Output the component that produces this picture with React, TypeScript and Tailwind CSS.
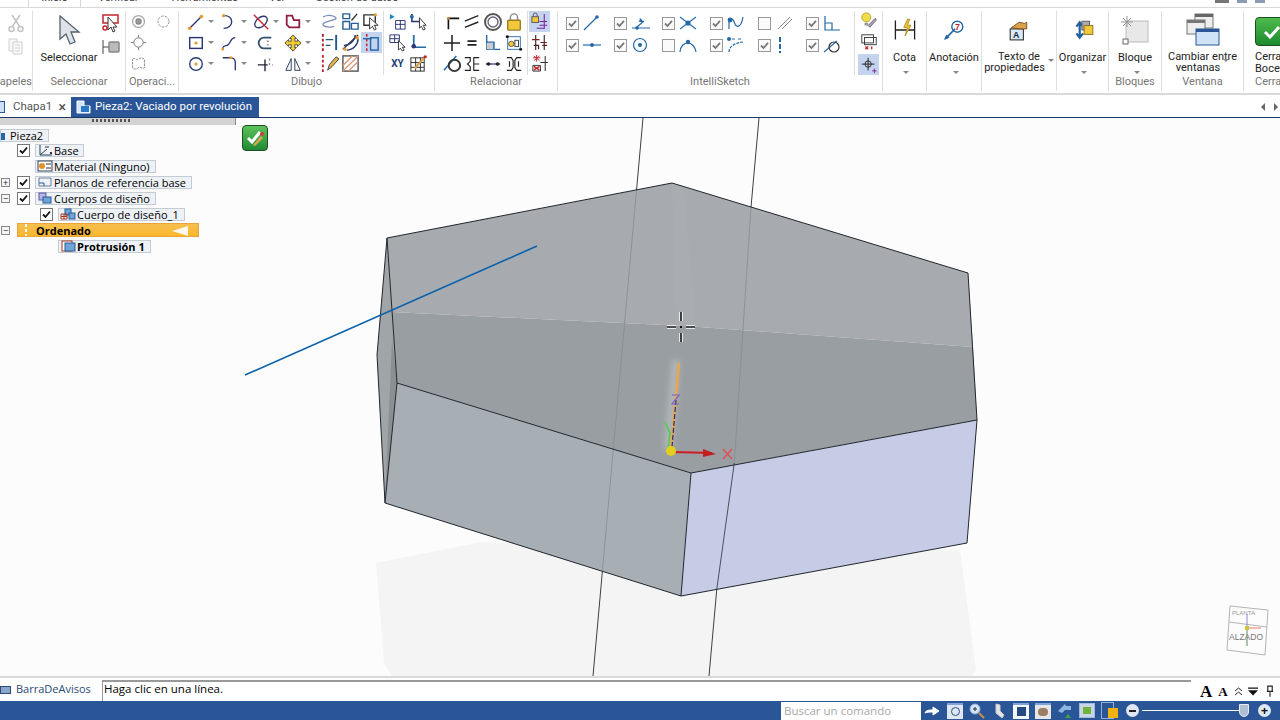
import type { ReactNode } from 'react';

const NAVY = '#2b3674';
const BLUE = '#2468a8';
const ORANGE = '#e59a2c';
const RED = '#c4262e';

function Ic({ children, size = 20 }: { children: ReactNode; size?: number }) {
	return (
		<svg viewBox="0 0 20 20" width={size} height={size} fill="none" stroke={NAVY} strokeWidth="1.5" className="shrink-0">
			{children}
		</svg>
	);
}

const Caret = () => <span className="w-0 h-0 ml-[3px] border-x-[3px] border-x-transparent border-t-[3px] border-t-[#888]" />;

function Cell({ caret, active, w = 'w-[21px]', children }: { caret?: boolean; active?: boolean; w?: string; children?: ReactNode }) {
	return (
		<div className={`${w} h-[21px] flex items-center justify-center ${active ? 'bg-[#c5d4ee]' : ''}`}>
			{children}
			{caret && <Caret />}
		</div>
	);
}

function Group({ w, label, children, className = '' }: { w: string; label?: string; children: ReactNode; className?: string }) {
	return (
		<div className={`${w} shrink-0 h-full flex flex-col items-center border-r border-[#dedede] ${className}`}>
			<div className="flex-1 w-full flex min-h-0">{children}</div>
			<div className="h-[17px] text-[11px] leading-[15px] text-[#767676] whitespace-nowrap">{label}</div>
		</div>
	);
}

function Large({ label, caret, icon }: { label: ReactNode; caret?: boolean; icon: ReactNode }) {
	return (
		<div className="w-full flex flex-col items-center">
			<div className="h-[37px] mt-[1px] flex items-center justify-center">{icon}</div>
			<div className="mt-[1px] pt-[2px] text-[11px] leading-[11.5px] text-[#222] text-center whitespace-nowrap">{label}</div>
			{caret && <div className="mt-[8px] flex"><Caret /></div>}
		</div>
	);
}

function Check({ on = true }: { on?: boolean }) {
	return (
		<svg width="13" height="13" viewBox="0 0 13 13" className="shrink-0">
			<rect x="0.5" y="0.5" width="12" height="12" fill="#fbfbfb" stroke="#999" />
			{on && <path d="M3 6.500 5.500 9 10 3.800" fill="none" stroke="#777" strokeWidth="1.800" />}
		</svg>
	);
}

function ISk({ on, children }: { on?: boolean; children: ReactNode }) {
	return (
		<div className="w-[48px] h-[22px] flex items-center gap-[3px]">
			<Check on={on} />
			<svg width="20" height="18" viewBox="0 0 20 18" fill="none" stroke={BLUE} strokeWidth="1.200">
				{children}
			</svg>
		</div>
	);
}

const dot = (x: number, y: number, c = BLUE, r = 1.8) => <circle cx={x} cy={y} r={r} fill={c} stroke="none" />;

function Ribbon() {
	return (
		<div className="h-[87px] shrink-0 flex border-b-2 border-[#d9d9d9] bg-white pt-[3px] pb-[2px] font-['Roboto',sans-serif]">
			<Group w="w-[33px]" label="apeles" className="items-end">
				<div className="w-full flex flex-col items-end pr-[6px] pt-[2px] gap-[3px] opacity-70">
					<Ic><g stroke="#aaa"><path d="m6 2 8 12M14 2 6 14" /><circle cx="5.500" cy="16" r="2.500" /><circle cx="14.500" cy="16" r="2.500" /></g></Ic>
					<Ic><g stroke="#bbb" strokeWidth="1"><path d="M3 3h8v12H3z" fill="#f4f4f4" /><path d="M7 6h9v12H7z" fill="#f8f8f8" /><path d="M9 9h5M9 12h5M9 15h5" /></g></Ic>
				</div>
			</Group>
			<Group w="w-[93px]" label="Seleccionar">
				<div className="w-[66px] pl-[6px]">
					<Large
						label="Seleccionar"
						icon={<svg width="24" height="32" viewBox="0 0 24 32"><path d="M3 1v23l6-5 4 10 5-2-4-10h8z" fill="#dde3e8" stroke="#56606a" strokeWidth="1.300" /></svg>}
					/>
				</div>
				<div className="flex flex-col gap-[4px] pt-[2px] pl-[2px]">
					<Ic><path d="M2 2h15v8H2z" stroke={RED} /><path d="M7 4v13l3-3 2 5 2-1-2-4h4z" fill="#fff" stroke="#333" strokeWidth="1" /><circle cx="4" cy="15" r="2" stroke={RED} /></Ic>
					<Ic><path d="M2 3v14M2 10h6" stroke="#444" strokeWidth="1" /><rect x="8" y="5" width="10" height="10" rx="1" fill="#bbb" stroke="#888" /></Ic>
				</div>
			</Group>
			<Group w="w-[53px]" label="Operaci...">
				<div className="w-full grid grid-cols-[1fr_1fr] grid-rows-[21px_21px_21px] pl-[2px]">
					<Cell><Ic size={17}><circle cx="10" cy="10" r="7" stroke="#aaa" /><circle cx="10" cy="10" r="3" fill="#999" stroke="#888" /></Ic></Cell>
					<Cell><Ic size={17}><circle cx="10" cy="10" r="6.500" stroke="#777" strokeWidth="1" strokeDasharray="3 1.500" /></Ic></Cell>
					<Cell><Ic size={17}><circle cx="10" cy="10" r="5.500" stroke="#666" strokeWidth="1" /><path d="M10 1v3M10 16v3M1 10h3M16 10h3" stroke="#666" strokeWidth="1" /></Ic></Cell>
					<div />
					<Cell><Ic size={17}><path d="M3 5c4-3 4 2 7 0s4-2 7 0v10c-3 2-4-2-7 0s-4 2-7 0z" stroke="#777" strokeWidth="1" strokeDasharray="3 1" /></Ic></Cell>
				</div>
			</Group>
			<Group w="w-[256px]" label="Dibujo">
				<div className="w-full flex pl-[5px]">
					<div className="grid grid-cols-[33px_32px_32px_32px] grid-rows-[21px_21px_21px]">
						<Cell w="w-[33px]" caret><Ic size={18}><path d="M3 17 16 4" />{dot(3, 17, ORANGE, 2)}{dot(16, 4, ORANGE, 2)}</Ic></Cell>
						<Cell w="w-[32px]" caret><Ic size={18}><path d="M4 3c12-1 12 14 0 14" />{dot(4, 3, ORANGE)}</Ic></Cell>
						<Cell w="w-[32px]" caret><Ic size={18}><ellipse cx="10" cy="10" rx="8" ry="5" transform="rotate(-40 10 10)" /><path d="M2 2l16 16" stroke={RED} /></Ic></Cell>
						<Cell w="w-[32px]" caret><Ic size={18}><path d="M3 3h6l2 5h6v8H6L3 13z" stroke="#8e1f3e" strokeWidth="2" /></Ic></Cell>
						<Cell w="w-[33px]" caret><Ic size={18}><rect x="3" y="4" width="14" height="12" strokeWidth="1.600" />{dot(10, 10, ORANGE)}</Ic></Cell>
						<Cell w="w-[32px]" caret><Ic size={18}><path d="M3 17c0-6 4-2 7-6s2-7 7-7" />{dot(3, 17, ORANGE, 1.500)}</Ic></Cell>
						<Cell w="w-[32px]"><Ic size={18}><path d="M17 4H9a6 6 0 0 0 0 12h8" strokeWidth="2" stroke="#32506e" /><path d="M12 8h2M12 12h2" stroke="#888" /></Ic></Cell>
						<Cell w="w-[32px]" caret><Ic size={18}><path d="M10 1 14 5H12V8H15V6l4 4-4 4v-2h-3v3h2l-4 4-4-4h2v-3H5v2l-4-4 4-4v2h3V5H6z" fill="#f0c92a" stroke="#444" strokeWidth="1" /></Ic></Cell>
						<Cell w="w-[33px]" caret><Ic size={18}><circle cx="10" cy="10" r="7" /><circle cx="10" cy="10" r="1" fill={ORANGE} stroke={ORANGE} /></Ic></Cell>
						<Cell w="w-[32px]" caret><Ic size={18}><path d="M3 3h9a5 5 0 0 1 5 5v9" />{dot(12, 3, ORANGE, 1.600)}</Ic></Cell>
						<Cell w="w-[32px]"><Ic size={18}><path d="M2 11h11M10 5v13" stroke="#223" /><path d="M15 4v2M15 9v2M18 11h1" stroke="#888" /></Ic></Cell>
						<Cell w="w-[32px]" caret><Ic size={18}><path d="M8 4v13H2zM12 4v13h6z" stroke="#31405e" strokeWidth="1.100" /></Ic></Cell>
					</div>
					<div className="ml-[6px] grid grid-cols-[21px_21px_22px] grid-rows-[21px_21px_21px]">
						<Cell><Ic><path d="M3 5c6-3 12-1 13 1s-12 3-13 6 9 4 11 2" stroke="#7c8eb8" strokeWidth="1.300" /></Ic></Cell>
						<Cell><Ic size={19}><path d="M2 2h7v5H2zM2 10h7v8H2zM11 12h7v6h-7z" stroke="#275f96" /><path d="m11 9 6-7" stroke="#333" /></Ic></Cell>
						<Cell><Ic size={19}><path d="M2 3h12v11H2z" stroke="#333" /><path d="M8 6v12l3-3 2 4 2-1-2-4h4z" fill="#fff" stroke="#333" strokeWidth="1" />{dot(14, 3, ORANGE)}</Ic></Cell>
						<Cell><Ic size={19}><path d="M3 1v18" stroke="#a3202a" strokeWidth="2" strokeDasharray="3 2" /><path d="M17 2v16" strokeWidth="2" stroke="#27578a" /><path d="M6 7h8M11 13h-5" stroke="#27578a" /></Ic></Cell>
						<Cell><Ic size={19}><path d="M2 17 18 2" stroke="#333" /><path d="M3 13c7 0 12-6 12-11M6 18c7 0 12-6 12-12" stroke={NAVY} />{dot(4, 17, ORANGE)}{dot(17, 5, ORANGE)}</Ic></Cell>
						<Cell active><Ic size={19}><path d="M5 1v18" stroke={RED} strokeWidth="1.600" strokeDasharray="3 2" /><rect x="9" y="5" width="8" height="13" stroke={BLUE} /><path d="M1 6h9" stroke={BLUE} /></Ic></Cell>
						<Cell><Ic size={19}><path d="M3 1v18" stroke={RED} strokeWidth="2" strokeDasharray="3 2" /><path d="m8 17 2-6 7-8 3 2-7 8z" fill="#e6b04a" stroke="#444" strokeWidth="1" /></Ic></Cell>
						<Cell><Ic size={19}><rect x="2" y="2" width="16" height="16" stroke="#555" /><path d="M2 12 12 2M2 18 18 2M8 18l10-10" stroke="#d99a7a" /></Ic></Cell>
						<div />
					</div>
					<div className="w-px h-[64px] bg-[#dcdcdc]" />
					<div className="ml-[3px] grid grid-cols-[21px_21px] grid-rows-[21px_21px_21px]">
						<Cell><Ic size={19}><path d="m2 2 5 3-5 3z" fill="#1f8ac0" stroke="none" /><path d="M8 9h10v9H8zM13 9v9M8 13h10" stroke={NAVY} strokeWidth="1" /></Ic></Cell>
						<Cell><Ic size={19}><path d="M3 2v8h8" strokeWidth="1.600" />{dot(3, 5, BLUE, 2)}<path d="M11 6v11l2-2 2 4 2-1-2-4h3z" fill="#fff" stroke="#333" strokeWidth="1" /></Ic></Cell>
						<Cell><Ic size={19}><path d="M2 2h10v8H2zM7 2v8M2 6h10" strokeWidth="1" /><path d="M11 8v10l2-2 2 3 2-1-2-3h3z" fill="#fff" stroke="#333" strokeWidth="1" /></Ic></Cell>
						<Cell><Ic size={19}><path d="M5 2v13h13" strokeWidth="1.800" stroke={BLUE} />{dot(5, 14, NAVY, 2.400)}</Ic></Cell>
						<Cell><span className="text-[10px] font-bold text-[#243c78] leading-none">XY</span></Cell>
						<Cell><Ic size={19}><rect x="2" y="4" width="14" height="14" stroke="#2a2a2a" strokeWidth="1" /><path d="M7 4v14M12 4v14M2 9h14M2 14h14" stroke="#2a2a2a" strokeWidth="1" /><path d="M6 15 16 4" stroke="#d8a040" strokeWidth="2" />{dot(17, 3, RED)}</Ic></Cell>
					</div>
				</div>
			</Group>
			<Group w="w-[123px]" label="Relacionar">
				<div className="w-full flex pl-[7px]">
					<div className="grid grid-cols-[20px_20px_21px_21px] grid-rows-[21px_21px_21px]">
						<Cell w="w-[20px]"><Ic size={18}><path d="M6 18V6h12" stroke="#111" strokeWidth="1.800" />{dot(6, 6, '#d08030', 1.600)}</Ic></Cell>
						<Cell w="w-[20px]"><Ic size={18}><path d="m2 9 15-6M2 16l15-6" stroke="#222" /></Ic></Cell>
						<Cell><Ic size={20}><circle cx="10" cy="10" r="8" stroke="#555" strokeWidth="2" /><circle cx="10" cy="10" r="5" stroke="#667" strokeWidth="1.400" /></Ic></Cell>
						<Cell><Ic size={18}><rect x="3" y="8" width="14" height="11" rx="1" fill="#f1c83a" stroke="#9a7a20" /><path d="M6 8V5a4 4 0 0 1 8 0v3" stroke="#888" strokeWidth="1.600" /></Ic></Cell>
						<Cell w="w-[20px]"><Ic size={18}><path d="M1 10h18M10 1v18" stroke="#222" strokeWidth="1.700" /></Ic></Cell>
						<Cell w="w-[20px]"><Ic size={18}><path d="M5 8h10M5 12h10" stroke="#222" strokeWidth="2" /></Ic></Cell>
						<Cell><Ic size={18}><path d="M3 1v16h15" stroke={BLUE} /><rect x="3" y="10" width="9" height="7" fill="#ccc" stroke="none" /><path d="M3 9h8v8" stroke={BLUE} /></Ic></Cell>
						<Cell><Ic size={18}><rect x="3" y="3" width="14" height="14" stroke={BLUE} strokeWidth="1" /><path d="M1 3h3M16 17h3" stroke="#000" strokeWidth="2.500" /><circle cx="7" cy="11" r="3" fill="#f1c83a" stroke="#555" strokeWidth="1" /><rect x="11" y="7" width="4" height="7" stroke="#333" strokeWidth="1" /></Ic></Cell>
						<Cell w="w-[20px]"><Ic size={19}><path d="M1 17 14 2" stroke={BLUE} strokeWidth="1.600" /><circle cx="12" cy="12" r="6" stroke="#333" strokeWidth="2" /></Ic></Cell>
						<Cell w="w-[20px]"><Ic size={18}><path d="M2 3h6v4l-3 3 3 3v4H2M18 3h-6v14h6M12 10h6" stroke="#222" strokeWidth="1.300" /></Ic></Cell>
						<Cell><Ic size={18}><path d="M2 10h16" stroke={NAVY} strokeWidth="1.400" />{dot(5, 10, '#222', 2)}{dot(15, 10, '#222', 2)}</Ic></Cell>
						<Cell><Ic size={18}><path d="M2 3h5l2 3v8l-2 3H2M18 3h-5l-2 3v8l2 3h5M5 7v6M15 7v6" stroke="#222" strokeWidth="1.300" /></Ic></Cell>
					</div>
					<div className="w-px h-[64px] ml-[3px] bg-[#dcdcdc]" />
					<div className="ml-[1px] flex flex-col">
						<Cell active><Ic size={19}><rect x="2" y="5" width="7" height="6" fill="#f1c83a" stroke="#555" strokeWidth="1" /><path d="M3.500 5V3a2 2 0 0 1 4 0v2" stroke="#555" strokeWidth="1" /><path d="M15 2v16M10 10h8M10 14h8M7 17h8" stroke="#7b1e9b" strokeWidth="1.100" /></Ic></Cell>
						<Cell><Ic size={19}><path d="M6 2v16M15 2v16" stroke="#4a1f1f" strokeWidth="1.200" /><path d="M2 7h8M11 10h7" stroke="#7b1e1e" strokeWidth="1.200" /><path d="M4 13h5v4M13 13h5" stroke="#4a1f1f" strokeWidth="1.200" /></Ic></Cell>
						<Cell><Ic size={19}><path d="M16 2v16M11 9h8" stroke="#333" strokeWidth="1.100" /><path d="M3 4h8M7 1v7M4 2l6 5M10 2 4 7" stroke={RED} strokeWidth="1" /><path d="M3 12h8v6H3z" stroke="#333" strokeWidth="1" /><path d="m4 13 6 4m0-4-6 4" stroke={RED} strokeWidth="1.700" /></Ic></Cell>
					</div>
				</div>
			</Group>
			<Group w="w-[325px]" label="IntelliSketch">
				<div className="w-[296px] shrink-0 pl-[8px] grid grid-cols-[48px_48px_48px_48px_48px_48px] grid-rows-[22px_22px] content-start pt-px">
					<ISk on><path d="M2 16 15 3" />{dot(15, 3)}</ISk>
					<ISk on><path d="M2 14h18M7 13l7-6" />{dot(7, 14)}<path d="m9 8 1-4 4 4z" fill={BLUE} stroke="none" /></ISk>
					<ISk on><path d="M2 3l16 12M18 3 2 15" strokeWidth="1.100" />{dot(10, 9, BLUE, 2.600)}</ISk>
					<ISk on><path d="M3 15V7c3-5 5 0 6 3s6 5 8-7" />{dot(4, 6, BLUE, 2.400)}</ISk>
					<ISk on={false}><path d="M4 15 16 3M8 15 18 5" stroke="#888" strokeWidth="1" /></ISk>
					<ISk on><path d="M3 2v14h15M3 9h7v7" /></ISk>
					<ISk on><path d="M1 9h18" />{dot(10, 9, BLUE, 2)}</ISk>
					<ISk on><circle cx="10" cy="9" r="6.500" />{dot(10, 9, BLUE, 2)}</ISk>
					<ISk on={false}><path d="M2 16c1-12 14-12 16 0" />{dot(10, 6, BLUE, 2.200)}</ISk>
					<ISk on><path d="M2 3h7m3 0h4M3 16c0-6 6-9 14-10" strokeDasharray="3 1" />{dot(3, 3, BLUE, 2)}</ISk>
					<ISk on><path d="M6 1v16" strokeWidth="2" strokeDasharray="5 2" /></ISk>
					<ISk on><path d="M2 16 15 5" /><circle cx="12" cy="11" r="5" stroke="#333" /></ISk>
				</div>
				<div className="w-[28px] h-[64px] border-l border-[#dedede] flex flex-col items-center">
					<Cell><Ic size={18}><circle cx="7" cy="6" r="5" fill="#f1dc4a" stroke="#b0a030" strokeWidth="1" /><path d="M5 12h4v3H5z" fill="#999" stroke="none" /><path d="m9 15 8-8 1 2-7 8z" fill="#b99ac2" stroke="#666" strokeWidth="1" /></Ic></Cell>
					<Cell><Ic size={18}><rect x="2" y="2" width="13" height="9" stroke="#333" strokeWidth="1" /><rect x="5" y="5" width="13" height="8" stroke="#333" strokeWidth="1" /><path d="M6 15l3 3m0-3-3 3M13 15v3" stroke={RED} strokeWidth="1.500" /></Ic></Cell>
					<div className="mt-[2px]"><Cell active><Ic size={18}><path d="M9 2v14M2 9h14" stroke="#222" strokeWidth="1.100" /><circle cx="9" cy="9" r="3.500" stroke="#222" strokeWidth="1" /><path d="M16 14v5M13.500 16.500h5" stroke="#7b1e9b" strokeWidth="1" /></Ic></Cell></div>
				</div>
			</Group>
			<Group w="w-[44px]">
				<Large
					label="Cota"
					caret
					icon={<Ic size={24}><path d="M2 2v16M18 2v16M2 10h16" stroke="#222" strokeWidth="1.100" /><path d="m12 1-3 7h3l-2 7 5-9h-3l2-5z" fill="#f1c83a" stroke="#a88618" strokeWidth=".7" /></Ic>}
				/>
			</Group>
			<Group w="w-[55px]">
				<Large
					label="Anotación"
					caret
					icon={<Ic size={22}><path d="m2 18 9-9" stroke={BLUE} strokeWidth="1.500" /><path d="m1 19 2-5 3 3z" fill={BLUE} stroke="none" /><circle cx="13" cy="7" r="5" stroke={BLUE} strokeWidth="1.300" /><text x="11" y="10" fontSize="8" fill={RED} stroke="none" fontWeight="700" fontFamily="Liberation Sans">7</text></Ic>}
				/>
			</Group>
			<Group w="w-[75px]">
				<Large
					label={<>Texto de<br />propiedades<span className="inline-block align-middle"><Caret /></span></>}
					icon={<Ic size={22}><rect x="2" y="9" width="12" height="10" fill="#dbe9f7" stroke="#333" strokeWidth="1" /><text x="4.500" y="17.500" fontSize="8" fontWeight="700" fill="#123" stroke="none" fontFamily="Liberation Sans">A</text><path d="m3 8 7-5 5 1 2-1v6h-6z" fill="#d9a24b" stroke="#704a14" strokeWidth=".8" /></Ic>}
				/>
			</Group>
			<Group w="w-[52px]">
				<Large
					label="Organizar"
					caret
					icon={<Ic size={22}><path d="M4 7l3-4 3 4M4 13l3 4 3-4M7 4v12" stroke="#21609e" strokeWidth="2" /><rect x="9" y="2" width="7" height="8" fill="#aaa" stroke="#555" strokeWidth=".8" /><rect x="11" y="6" width="8" height="8" fill="#f1c83a" stroke="#85691b" strokeWidth=".8" /></Ic>}
				/>
			</Group>
			<Group w="w-[53px]" label="Bloques">
				<Large
					label="Bloque"
					caret
					icon={<svg width="30" height="30" viewBox="0 0 30 30"><rect x="6" y="6" width="22" height="21" fill="#e8e8e8" stroke="#bbb" /><path d="M7 1v11M1 7h12M3 3l8 8M11 3l-8 8" stroke="#999" /><rect x="3" y="24" width="5" height="5" fill="#fff" stroke="#666" /></svg>}
				/>
			</Group>
			<Group w="w-[82px]" label="Ventana">
				<Large
					label={<>Cambiar entre<br />ventanas<span className="inline-block align-middle"><Caret /></span></>}
					icon={<svg width="34" height="34" viewBox="0 0 34 34"><rect x="9" y="1" width="18" height="14" fill="#eee" stroke="#777" /><rect x="9" y="1" width="18" height="3" fill="#666" /><rect x="1" y="7" width="18" height="14" fill="#eee" stroke="#777" /><rect x="1" y="7" width="18" height="3" fill="#777" /><rect x="10" y="16" width="23" height="16" fill="#cfe3f6" stroke="#2a5596" /><rect x="10" y="16" width="23" height="3" fill="#2a5596" /></svg>}
				/>
			</Group>
			<Group w="w-[37px]" label="Cerrar" className="border-r-0 overflow-hidden !items-start pl-[11px]">
				<div className="flex flex-col items-start">
					<div className="w-[30px] h-[30px] mt-[6px] rounded-[4px] border border-[#1e4d22] bg-gradient-to-b from-[#4dbb4d] to-[#1a8a2e] flex items-center pl-[7px]">
						<svg width="18" height="14" viewBox="0 0 18 14"><path d="m2 7 5 5 9-10" fill="none" stroke="#fff" strokeWidth="3" /></svg>
					</div>
					<div className="mt-[5px] text-[11px] leading-[11.5px] text-[#222] whitespace-nowrap">Cerrar<br />Boceto</div>
				</div>
			</Group>
		</div>
	);
}

function Box({ bold, children }: { bold?: boolean; children: ReactNode }) {
	return (
		<span className={`h-[13px] flex items-center gap-[1px] border border-[#c3ccd4] bg-[#eef2f6] text-[11px] leading-none whitespace-nowrap text-black ${bold ? 'font-bold' : ''}`}>
			{children}
		</span>
	);
}

function TreeIcon({ children }: { children: ReactNode }) {
	return <svg width="16" height="12" viewBox="0 0 16 12" className="shrink-0 ml-[1px]" fill="none">{children}</svg>;
}

const Exp = ({ sign }: { sign?: string }) => (
	<span className="w-[9px] h-[9px] border border-[#888] bg-[#f4f4f4] flex items-center justify-center text-[9px] leading-none text-[#222] shrink-0">{sign}</span>
);

const TreeCheck = () => (
	<svg width="13" height="13" viewBox="0 0 13 13" className="shrink-0">
		<rect x=".5" y=".5" width="12" height="12" fill="#fff" stroke="#777" />
		<path d="M3 6.500 5.500 9 10 3.500" fill="none" stroke="#111" strokeWidth="1.800" />
	</svg>
);

function Tree() {
	return (
		<div className="absolute left-0 top-0 w-[236px] flex flex-col">
			<div className="h-[7px] bg-[#d3d3d3] border-r border-[#888] flex justify-center">
				<span className="mt-[1px] mr-[14px] w-[38px] h-[3px] bg-[repeating-linear-gradient(90deg,#555_0,#555_2px,transparent_2px,transparent_4px)]" />
			</div>
			<div className="pt-[3px] flex flex-col">
				<div className="h-[14px] flex items-center"><Box><span className="w-[8px] overflow-hidden"><span className="block w-[4px] h-[7px] mt-[3px] bg-[#2468a8]" /></span><span className="pr-[5px]">Pieza2</span></Box></div>
				<div className="h-[16px] flex items-center pl-[17px] gap-[5px]">
					<TreeCheck />
					<Box><TreeIcon><path d="M3 1v10h12M3 11l7-6" stroke="#245" /><path d="M8 3h4M13 8l2 2m0-2-2 2" stroke="#333" /></TreeIcon><span className="pr-[4px]">Base</span></Box>
				</div>
				<div className="h-[16px] flex items-center pl-[35px]">
					<Box><TreeIcon><rect x="1" y="1" width="14" height="10" fill="#fff" stroke="#345" /><path d="M9 4h5M9 8h5" stroke="#333" /><circle cx="5" cy="6" r="3" fill="#e2902a" /></TreeIcon><span className="pr-[5px]">Material (Ninguno)</span></Box>
				</div>
				<div className="h-[16px] flex items-center pl-[1px]">
					<Exp sign="+" />
					<span className="w-[7px]" />
					<TreeCheck />
					<span className="w-[5px]" />
					<Box><TreeIcon><path d="M2 2h12v8H2z" stroke="#6b7f92" /><path d="M2 7h5v3" stroke="#245d95" /></TreeIcon><span className="pr-[5px]">Planos de referencia base</span></Box>
				</div>
				<div className="h-[16px] flex items-center pl-[1px]">
					<Exp sign="−" />
					<span className="w-[7px]" />
					<TreeCheck />
					<span className="w-[5px]" />
					<Box><TreeIcon><rect x="2" y="1" width="7" height="7" fill="#b9b6e0" stroke="#55a" /><rect x="6" y="5" width="8" height="6" fill="#6fa5d8" stroke="#245d95" /></TreeIcon><span className="pr-[5px]">Cuerpos de diseño</span></Box>
				</div>
				<div className="h-[16px] flex items-center pl-[40px] gap-[5px]">
					<TreeCheck />
					<Box><TreeIcon><rect x="5" y="1" width="6" height="6" fill="#6fa5d8" stroke="#245d95" /><rect x="9" y="5" width="6" height="6" fill="#6fa5d8" stroke="#245d95" /><path d="M1 6h6v5H1zM4 6v5M1 8.500h6" stroke="#a8341c" /></TreeIcon><span className="pr-[5px]">Cuerpo de diseño_1</span></Box>
				</div>
				<div className="h-[16px] flex items-center pl-[1px]">
					<Exp sign="−" />
					<span className="w-[7px]" />
					<div className="w-[182px] h-[14px] flex items-center border border-[#e8a43a] bg-gradient-to-b from-[#f5c04f] to-[#fbb62a] pl-[18px] text-[11px] font-bold text-black leading-none relative">
						Ordenado
						<span className="absolute left-[7px] top-0 h-full w-[2px] bg-[repeating-linear-gradient(180deg,#fff_0,#fff_3px,transparent_3px,transparent_5px)]" />
						<span className="absolute right-[10px] top-[2px] w-0 h-0 border-y-[5px] border-y-transparent border-r-[16px] border-r-white/90" />
					</div>
				</div>
				<div className="h-[16px] flex items-center pl-[58px]">
					<Box bold><TreeIcon><rect x="2" y="1" width="10" height="10" fill="#fff" stroke="#a8341c" /><rect x="5" y="3" width="10" height="8" fill="#6fa5d8" stroke="#245d95" /></TreeIcon><span className="pr-[5px]">Protrusión 1</span></Box>
				</div>
			</div>
		</div>
	);
}

function Model() {
	return (
		<svg viewBox="0 118 1280 558" className="absolute inset-0 w-full h-full">
			<defs>
				<filter id="soft" x="-100%" y="-20%" width="300%" height="140%">
					<feGaussianBlur stdDeviation="3" />
				</filter>
			</defs>
			<path d="M376 563 482 542 960 550 976 670 972 676 392 676 384 663z" fill="#f4f4f4" />
			<path d="M643 118 593 676M759 118 709 676" stroke="#3c4044" strokeWidth="1" />
			<path d="M387 238 672 183 968 273 973 347 685 326 392 312z" fill="#a7abaf" />
			<path d="M392 312 685 326 973 347 977 420 691 473 397 383z" fill="#989ea1" />
			<path d="M387 238 392 312 397 383 385 503 377 355z" fill="#a0a5a8" />
			<path d="M392 340 397 383 385 503z" fill="#8a8f92" />
			<path d="M397 383 691 473 681 596 385 503z" fill="#a7afb5" />
			<path d="M691 473 977 420 967 543 681 596z" fill="#c6cce6" />
			<path d="M672 183 676 326 696 327 684 190z" fill="#afb2b6" opacity=".35" />
			<path d="M676 360 668 450" stroke="#b4b8ba" strokeWidth="8" filter="url(#soft)" />
			<path d="M636.500 190 602.400 571M751 207 734.300 463" stroke="#878c90" strokeWidth=".8" />
			<path d="M734.300 463 716.800 589" stroke="#4a4f5c" strokeWidth="1" />
			<g fill="none" stroke="#20262c" strokeWidth="1">
				<path d="M387 238 672 183 968 273 977 420 691 473 397 383 387 238" />
				<path d="M387 238 377 355 385 503 397 383" />
				<path d="M385 503 681 596 691 473M681 596 967 543 977 420" />
			</g>
			<path d="M245 375 537 246" stroke="#0a62ad" strokeWidth="1.600" />
			<path d="M679 363 671 450" stroke="#eda64a" strokeWidth="2.500" />
			<path d="M676 400 672 447" stroke="#2c2c66" strokeWidth="1.200" strokeDasharray="5 2" />
			<path d="M665 422 670 433 668 450" stroke="#4fd04a" strokeWidth="1.600" fill="none" />
			<path d="M672 452 712 453" stroke="#d01c22" strokeWidth="2" />
			<path d="m703 449 13 5-13 3z" fill="#c21e22" />
			<circle cx="671" cy="451" r="5" fill="#e3cf1e" />
			<path d="m723 449 9 10m0-10-9 10" stroke="#e05058" strokeWidth="1.500" />
			<path d="m672 395 7 0-7 9 7 0" stroke="#6d64d6" strokeWidth="1.200" fill="none" />
			<g strokeWidth="1.600">
				<path d="M681 312v9M681 333v9M667 327h9M686 327h9" stroke="#fff" strokeWidth="3.500" />
				<path d="M681 312v9M681 333v9M667 327h9M686 327h9" stroke="#111" />
				<path d="M680 326h2v2h-2z" fill="#111" stroke="none" />
			</g>
			<g fill="none" stroke="#b4b4b4" strokeWidth="1">
				<path d="M1230 606 1268 610 1265 655 1227 650zM1229 622 1267 627" />
			</g>
			<path d="M1247 628v18" stroke="#5a8c5a" strokeWidth="1" />
			<path d="M1247 628 1247 614" stroke="#8a8ad8" strokeWidth="1" />
			<path d="M1247 628h14" stroke="#e07a7a" strokeWidth="1" />
			<rect x="1245" y="626" width="4" height="4" fill="#cfc43c" />
			<text x="1229" y="640" fontSize="8.500" fill="#777" fontFamily="Liberation Sans">ALZADO</text>
			<text x="1232" y="615" fontSize="6" fill="#999" fontFamily="Liberation Sans">PLANTA</text>
		</svg>
	);
}

function StatusIcons() {
	return (
		<div className="flex items-center gap-[6px]">
			<svg width="17" height="12" viewBox="0 0 17 12" className="shrink-0"><path d="M1 8c1-3 4-3 8-3V2l6 4-6 4V7c-3 0-6 0-8 1z" fill="#fff" stroke="#fff" /></svg>
			<span className="w-[16px] h-[16px] bg-[#dfe7f2] border-t-2 border-[#7ea3d6] flex items-center justify-center"><span className="w-[9px] h-[9px] rounded-full border border-[#2a4f86]" /></span>
			<svg width="16" height="16" viewBox="0 0 16 16" className="shrink-0"><circle cx="6" cy="6" r="5" fill="#d4e2f4" stroke="#8eb3dd" /><path d="m10 10 5 5" stroke="#c98e4a" strokeWidth="2" /><path d="M4 6h4M6 4v4" stroke="#234" /></svg>
			<svg width="16" height="16" viewBox="0 0 16 16" className="shrink-0"><path d="m5 1 4 1v6l4 4-2 3-6-5z" fill="#e4e4e4" stroke="#ccc" /></svg>
			<span className="w-[16px] h-[16px] bg-[#f3f6fb] border-t-2 border-[#7ea3d6] flex items-center justify-center"><span className="w-[9px] h-[9px] bg-[#244a80]" /></span>
			<span className="w-[16px] h-[16px] bg-[#e6e6e6] border-t-2 border-[#7ea3d6] flex items-center justify-center"><span className="w-[10px] h-[8px] rounded-sm bg-[#9b7d64]" /></span>
			<svg width="16" height="16" viewBox="0 0 16 16" className="shrink-0"><path d="M8 1 1 8l4 2 3-3h6V3H9z" fill="#8fb6e2" /><path d="m11 11 3 4H8z" fill="#38a84a" /></svg>
			<span className="w-[16px] h-[15px] bg-[#c7d5e6] border border-[#9db8d9] flex items-center justify-center"><span className="w-[8px] h-[7px] bg-[#6fb23c]" /></span>
			<span className="w-[13px] h-[17px] mr-[3px] relative border border-[#8fb0dc]"><span className="absolute right-[-5px] bottom-0 w-[10px] h-[10px] bg-[#f0b20f]" /></span>
		</div>
	);
}

export default function App() {
	return (
		<div className="w-[1280px] h-[720px] overflow-hidden flex flex-col bg-white font-['Open_Sans','Noto_Sans',sans-serif]">
			<div className="h-[8px] shrink-0 border-b border-[#d9d9d9] overflow-hidden flex text-[11px] leading-none relative font-['Roboto',sans-serif]">
				<div className="ml-[28px] w-[53px] h-[16px] border-x border-[#d9d9d9] text-center -mt-[8px] text-[#333]">Inicio</div>
				<div className="ml-[17px] -mt-[8px] text-[#444]">Verificar</div>
				<div className="ml-[33px] -mt-[8px] text-[#444]">Herramientas</div>
				<div className="ml-[31px] -mt-[8px] text-[#444]">Ver</div>
				<div className="ml-[30px] -mt-[8px] text-[#444]">Gestión de datos</div>
				<div className="ml-auto mr-[15px] flex gap-[8px]">
					<span className="w-[14px] h-[3px] bg-[#777]" />
					<span className="w-[10px] h-[3px] bg-[#8a9ab0]" />
					<span className="w-[10px] h-[3px] bg-[#8a9ab0]" />
				</div>
			</div>
			<Ribbon />
			<div className="h-[23px] shrink-0 flex items-stretch border-b border-[#1c3a62] bg-white text-[11.500px] pt-[2px] font-['Roboto',sans-serif]">
				<div className="w-[71px] flex items-center text-[#555]">
					<span className="w-[5px] h-[12px] border border-l-0 border-[#2a5596] bg-[#cfe0f2]" />
					<span className="ml-[8px]">Chapa1</span>
					<span className="ml-auto mr-[5px] text-[14px] leading-none text-[#444]">×</span>
				</div>
				<div className="w-[188px] bg-[#2a5596] flex items-center text-white pl-[5px] gap-[4px] whitespace-nowrap">
					<svg width="15" height="14" viewBox="0 0 15 14" className="shrink-0"><path d="M1 1h7v5h6v7H1z" fill="#d4e6f8" stroke="#fff" /><rect x="5" y="6" width="8" height="6" fill="#2a78c8" /></svg>
					Pieza2: Vaciado por revolución
				</div>
				<div className="ml-auto mr-[2px] flex items-center gap-[9px] pb-[1px]">
					<span className="w-0 h-0 border-y-[4px] border-y-transparent border-r-[4px] border-r-[#666]" />
					<span className="w-0 h-0 border-y-[4px] border-y-transparent border-l-[4px] border-l-[#666]" />
				</div>
			</div>
			<div className="flex-1 relative min-h-0 bg-[#fcfcfc]">
				<Model />
				<Tree />
				<div className="absolute left-[242px] top-[7px] w-[26px] h-[26px] rounded-[4px] border border-[#1e4d22] bg-gradient-to-b from-[#5cc25c] to-[#1e8a35] flex items-center justify-center">
					<svg width="20" height="20" viewBox="0 0 20 20"><path d="m3 10 4 4 8-10" fill="none" stroke="#fff" strokeWidth="3" /><path d="m8 17 8-9 2 2-8 8z" fill="#dba64c" /><circle cx="17" cy="6" r="2" fill="#d43838" /></svg>
				</div>
			</div>
			<div className="h-[25px] shrink-0 flex border-t-2 border-[#dadada] bg-white">
				<div className="w-[102px] flex items-center text-[11px] text-[#2a4a78] whitespace-nowrap">
					<span className="w-[11px] h-[8px] border border-[#2a4a78] bg-[#8aa7cb] mr-[5px]" />
					BarraDeAvisos
				</div>
				<div className="w-[1089px] border-t-2 border-l border-[#999] mt-[2px] pl-[1px] text-[11.500px] leading-[14px] text-black">Haga clic en una línea.</div>
				<div className="flex items-center ml-[9px] gap-[5px] pt-[3px] font-['Liberation_Serif',serif] font-bold leading-none text-black">
					<span className="text-[17px]">A</span>
					<span className="text-[13px] ml-[1px]">A</span>
					<svg width="9" height="9" viewBox="0 0 9 9" className="ml-[1px] shrink-0"><path d="m1 4 3.500-3L8 4M1 8l3.500-3L8 8" fill="none" stroke="#222" /></svg>
					<svg width="10" height="9" viewBox="0 0 11 9" className="shrink-0"><path d="M0 0h11v1.500H0zM0 3h11L5.500 9z" fill="#111" /></svg>
					<svg width="8" height="12" viewBox="0 0 9 13" className="ml-[3px] shrink-0"><path d="M2 1h5v6H2zM1 7h7M4.500 8v5" fill="none" stroke="#222" strokeWidth="1.300" /></svg>
				</div>
			</div>
			<div className="h-[19px] shrink-0 bg-[#2a5596] flex items-center">
				<div className="ml-[781px] w-[140px] h-[18px] mt-[1px] bg-white text-[11.500px] leading-[18px] text-[#a8a8a8] pl-[3px] whitespace-nowrap shrink-0">Buscar un comando</div>
				<div className="ml-[3px]"><StatusIcons /></div>
				<div className="ml-[9px] flex items-center">
					<span className="w-[13px] h-[13px] rounded-full bg-[#dfe7f2] flex items-center justify-center"><span className="w-[7px] h-[2px] bg-[#222]" /></span>
					<span className="ml-[3px] w-[97px] h-px bg-white" />
					<span className="w-[10px] h-[13px] bg-[#aebfd6] rounded-b-[5px] border border-[#e5ecf5]" />
					<span className="ml-[9px] w-[13px] h-[13px] rounded-full bg-[#dfe7f2] flex items-center justify-center text-[13px] font-bold leading-none text-[#111]">+</span>
				</div>
			</div>
		</div>
	);
}
